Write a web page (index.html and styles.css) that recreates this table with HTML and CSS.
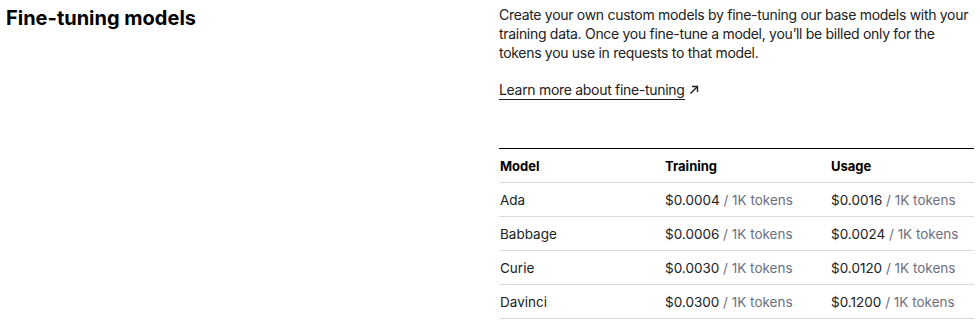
FILE: index.html
```html
<!DOCTYPE html>
<html lang="en">
  <head>
    <meta charset="UTF-8" />
    <meta name="viewport" content="width=device-width, initial-scale=1.0" />
    <title>Pricing - Fine-tuning models</title>
    <link rel="stylesheet" href="styles.css">
  </head>
  <body>
    <section class="pricing-section">
      <h2>Fine-tuning models</h2>
      <div class="details">
        <p>
          Create your own custom models by fine-tuning our base models with your
          training data. Once you fine-tune a model, you’ll be billed only for the
          tokens you use in requests to that model.
        </p>
        <a class="learn-more" href="#">
          <span>Learn more about fine-tuning</span>
          <svg width="10" height="10" viewBox="0 0 10 10" fill="none" stroke="currentColor" stroke-width="1.4">
            <path d="M1.5 8.5 L8.5 1.5" />
            <path d="M3 1.5 H8.5 V7" />
          </svg>
        </a>
        <table class="price-table">
          <colgroup>
            <col class="col-model" />
            <col class="col-training" />
            <col />
          </colgroup>
          <thead>
            <tr>
              <th>Model</th>
              <th>Training</th>
              <th>Usage</th>
            </tr>
          </thead>
          <tbody>
            <tr>
              <td>Ada</td>
              <td>$0.0004 <span class="unit">/ 1K tokens</span></td>
              <td>$0.0016 <span class="unit">/ 1K tokens</span></td>
            </tr>
            <tr>
              <td>Babbage</td>
              <td>$0.0006 <span class="unit">/ 1K tokens</span></td>
              <td>$0.0024 <span class="unit">/ 1K tokens</span></td>
            </tr>
            <tr>
              <td>Curie</td>
              <td>$0.0030 <span class="unit">/ 1K tokens</span></td>
              <td>$0.0120 <span class="unit">/ 1K tokens</span></td>
            </tr>
            <tr>
              <td>Davinci</td>
              <td>$0.0300 <span class="unit">/ 1K tokens</span></td>
              <td>$0.1200 <span class="unit">/ 1K tokens</span></td>
            </tr>
          </tbody>
        </table>
      </div>
    </section>
  </body>
</html>
```

FILE: styles.css
```css
* {
  margin: 0;
  padding: 0;
  box-sizing: border-box;
}

body {
  font-family: Inter, "Noto Sans", sans-serif;
  color: #202123;
  background: #fff;
  padding: 0 6px;
}

.pricing-section {
  display: grid;
  grid-template-columns: 493px 475px;
}

h2 {
  font-size: 20px;
  font-weight: 700;
  line-height: 24px;
  padding-top: 6px;
  color: #000;
}

.details p {
  font-size: 14px;
  line-height: 19px;
  letter-spacing: -0.3px;
  padding-top: 5px;
  color: #202123;
}

.learn-more {
  display: inline-flex;
  align-items: center;
  gap: 4px;
  margin-top: 18px;
  font-size: 14px;
  line-height: 19px;
  letter-spacing: -0.3px;
  color: #202123;
  text-decoration: none;
}

.learn-more span {
  border-bottom: 1px solid #202123;
}

.price-table {
  width: 100%;
  table-layout: fixed;
  margin-top: 48px;
  border-collapse: collapse;
  border-top: 1px solid #000;
  font-size: 13.5px;
}

.col-model {
  width: 165px;
}

.col-training {
  width: 166px;
}

.price-table th,
.price-table td {
  text-align: left;
  height: 34px;
  padding: 0 0 0 1px;
  border-bottom: 1px solid #d9d9e3;
  white-space: nowrap;
}

.price-table th {
  font-weight: 700;
  color: #000;
  font-size: 13px;
}

.price-table .unit {
  color: #6e6e80;
}
```
